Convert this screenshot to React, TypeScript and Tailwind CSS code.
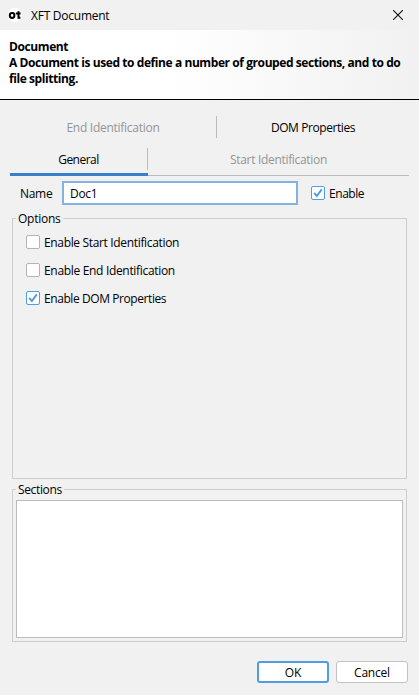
import React, { useState } from 'react';

type CheckProps = { label: string; checked: boolean; onToggle: () => void; spacing?: string };

function Check({ label, checked, onToggle, spacing = '' }: CheckProps) {
  return (
    <button type="button" role="checkbox" aria-checked={checked} onClick={onToggle} className="flex h-[14px] items-center gap-1">
      <span
        className={`flex h-[14px] w-[14px] shrink-0 items-center justify-center rounded-[2px] border bg-white ${
          checked ? 'border-[#4f9ee3]' : 'border-[#b4b4b4]'
        }`}
      >
        {checked && (
          <svg width="12" height="12" viewBox="0 0 12 12" fill="none" stroke="#4a9be4" strokeWidth="1.9">
            <path d="M2.2 5.8 L4.9 9 L9.8 2.4" />
          </svg>
        )}
      </span>
      <span className={`pt-[2px] leading-4 whitespace-nowrap ${spacing}`}>{label}</span>
    </button>
  );
}

export default function App() {
  const [enabled, setEnabled] = useState(true);
  const [start, setStart] = useState(false);
  const [end, setEnd] = useState(false);
  const [dom, setDom] = useState(true);
  const [name, setName] = useState('Doc1');

  return (
    <div className="flex h-[695px] w-[419px] flex-col overflow-hidden bg-[#f1f1f1] font-['Segoe_UI','Open_Sans',sans-serif] text-[12px] leading-4 text-black">
      <header className="flex h-[30px] shrink-0 items-center pl-2">
        <svg width="14" height="14" viewBox="0 0 14 14">
          <circle cx="7" cy="7" r="7" fill="#fff" />
          <ellipse cx="4.1" cy="7.5" rx="2.3" ry="2.4" fill="none" stroke="#000" strokeWidth="2" />
          <path d="M10.5 3.2V9.8H12.4 M7.8 5.4H12.6" fill="none" stroke="#000" strokeWidth="2" />
        </svg>
        <span className="ml-[9px] pt-[2px] tracking-[-0.25px]">XFT Document</span>
        <svg className="mr-[16px] ml-auto" width="10" height="10" viewBox="0 0 10 10" stroke="#111" strokeWidth="1.1">
          <path d="M0 0L10 10M10 0L0 10" />
        </svg>
      </header>

      <section className="h-[70px] shrink-0 border-b border-black bg-linear-to-r from-white from-40% to-[#f1f1f1] pt-[9px] pl-[9px] font-bold">
        <p className="tracking-[-0.4px]">Document</p>
        <p className="tracking-[-0.42px] whitespace-nowrap">A Document is used to define a number of grouped sections, and to do</p>
        <p className="tracking-[-0.42px]">file splitting.</p>
      </section>

      <nav className="mx-[10px] flex h-[76px] shrink-0 flex-col pt-4">
        <div className="flex h-[22px]">
          <button className="w-[207px] border-r border-[#bcbcbc] pt-[2px] text-[#949494] tracking-[-0.27px]">End Identification</button>
          <button className="flex-1 pt-[2px] tracking-[-0.42px]">DOM Properties</button>
        </div>
        <div className="mt-[10px] flex h-[28px]">
          <div className="flex w-[138px] flex-col border-b-[3px] border-[#3a80c8]">
            <button className="h-[22px] border-r border-[#bcbcbc] pt-[2px] tracking-[-0.5px]">General</button>
          </div>
          <div className="flex flex-1 flex-col border-b border-[#bcbcbc]">
            <button className="h-[22px] pt-[2px] text-[#949494] tracking-[-0.32px]">Start Identification</button>
          </div>
        </div>
      </nav>

      <div className="mt-[5px] flex h-6 shrink-0 items-center pl-5">
        <label className="w-[42px] pt-[2px] tracking-[-0.3px]" htmlFor="name">Name</label>
        <input
          id="name"
          value={name}
          onChange={(e) => setName(e.target.value)}
          className="h-6 w-[236px] border-2 border-[#85b3e0] bg-white px-[6px] pt-px tracking-[-0.3px] outline-none"
        />
        <div className="ml-[13px]">
          <Check label="Enable" checked={enabled} onToggle={() => setEnabled(!enabled)} spacing="tracking-[-0.45px]" />
        </div>
      </div>

      <fieldset className="mx-3 mt-[5px] h-[269px] shrink-0 border border-[#cdcdcd] pl-[13px]">
        <legend className="ml-[-10px] h-4 px-[2px] pt-px tracking-[-0.25px]">Options</legend>
        <div className="mt-[9px] flex flex-col items-start gap-[14px]">
          <Check label="Enable Start Identification" checked={start} onToggle={() => setStart(!start)} spacing="tracking-[-0.34px]" />
          <Check label="Enable End Identification" checked={end} onToggle={() => setEnd(!end)} spacing="tracking-[-0.32px]" />
          <Check label="Enable DOM Properties" checked={dom} onToggle={() => setDom(!dom)} spacing="tracking-[-0.42px]" />
        </div>
      </fieldset>

      <fieldset className="mx-3 mt-[2px] h-[161px] shrink-0 border border-[#cdcdcd] px-[3px]">
        <legend className="h-4 px-[2px] pt-px tracking-[-0.35px]">Sections</legend>
        <div className="mt-[3px] h-[138px] border border-[#bcbcbc] bg-white" />
      </fieldset>

      <footer className="mt-[19px] flex h-[22px] justify-end gap-[7px] pr-[11px]">
        <button className="w-[72px] rounded-[3px] border-2 border-[#4f9ee3] bg-white pt-px leading-[18px]">OK</button>
        <button className="w-[72px] rounded-[3px] border border-[#c2c2c2] bg-white pt-px leading-5 tracking-[-0.2px]">Cancel</button>
      </footer>
    </div>
  );
}
